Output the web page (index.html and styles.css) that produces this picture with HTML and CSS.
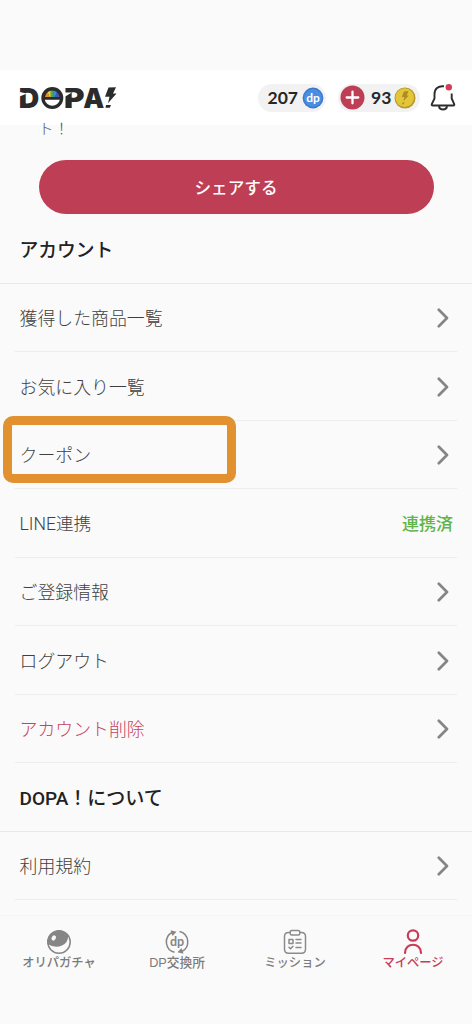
FILE: index.html
```html
<!DOCTYPE html>
<html lang="ja">
<head>
<meta charset="utf-8">
<meta name="viewport" content="width=device-width, initial-scale=1">
<title>DOPA! マイページ</title>
<link rel="stylesheet" href="styles.css">
</head>
<body>
<svg width="0" height="0" class="defs" aria-hidden="true">
  <symbol id="chevron" viewBox="0 0 12 20"><path d="M1.800 1.800 10 10l-8.200 8.200" fill="none" stroke="#858585" stroke-width="2.700" stroke-linecap="round" stroke-linejoin="round"/></symbol>
</svg>
<div class="app">
  <header class="header">
    <svg class="logo" width="104" height="44" viewBox="-4 -10 104 44" role="img" aria-label="DOPA!">
      <g class="logo-text">
        <text x="-1.300" y="21.700" textLength="20.500" lengthAdjust="spacingAndGlyphs">D</text>
        <text x="44" y="21.700" textLength="20.500" lengthAdjust="spacingAndGlyphs">P</text>
        <text x="63.300" y="21.700" textLength="21" lengthAdjust="spacingAndGlyphs">A</text>
      </g>
      <path d="M-.5 1v4.500L4 8.500H-.5zM-.5 6l7.500 1.500-7.500 3z M44.500 6.500h7.300L44.500 11z" fill="#fff"/>
      <circle cx="32.300" cy="12" r="11" fill="#2b2b2b"/>
      <path d="M25 11a7.400 7.400 0 0 1 2.600-4.700l2 4.700z" fill="#f18a25"/>
      <path d="M27.600 6.300a7.400 7.400 0 0 1 3.200-1.600V11h-1.200z" fill="#e9d33b"/>
      <path d="M30.800 4.700h3V11h-3z" fill="#50aa52"/>
      <path d="M33.800 4.700A7.400 7.400 0 0 1 37 6.300L35 11h-1.200z" fill="#378fda"/>
      <path d="M37 6.300a7.400 7.400 0 0 1 2.600 4.700H35z" fill="#4557b8"/>
      <path d="M24.800 13.800h15a7.600 7.100 0 0 1-15 0z" fill="#fff"/>
      <path d="m88.500 1.500 7.500-.2-3 6.200h3.500l-8.500 9.800 1.500-6.500h-4.500z" fill="#2b2b2b"/>
      <path d="M86 19h5l-1.200 2.700h-4.300z" fill="#2b2b2b"/>
    </svg>
    <div class="wallet">
      <div class="pill pill-dp"><span class="amount">207</span>
        <svg width="22" height="22" viewBox="0 0 22 22"><circle cx="11" cy="11" r="10.400" fill="#3b79cc"/><circle cx="11" cy="11" r="9" fill="#4b8de0"/><text x="11" y="14.800" class="dp-coin">dp</text></svg>
      </div>
      <div class="pill pill-coin">
        <svg width="25" height="25" viewBox="0 0 25 25"><circle cx="12.500" cy="12.500" r="12" fill="#be3e56"/><path d="M12.500 6.700v11.600M6.700 12.500h11.600" stroke="#fff" stroke-width="2.300" stroke-linecap="round"/></svg>
        <span class="amount">93</span>
        <svg width="22" height="22" viewBox="0 0 22 22"><circle cx="11" cy="11" r="10.500" fill="#b7972c"/><circle cx="10.700" cy="10.600" r="9.300" fill="#e3c637"/><path d="m10 4.500 4.500-.4-1.800 4.300h2l-5.300 5.800 1-4.300H7.700zM8.500 15.500h2l-.6 1.700H8z" fill="#ad8b25"/></svg>
      </div>
    </div>
    <svg class="bell" width="26" height="28" viewBox="0 0 26 28">
      <path d="M14 2.300C8 1.500 4.500 5 4.500 10v4.500L1.800 20.200q-.5 1.300 1 1.300h20.400q1.500 0 1-1.300l-2.500-5.700V9.500M9 22.500c.7 4 7.300 4 8 0" fill="none" stroke="#2d2d2d" stroke-width="1.900"/>
      <circle cx="18.800" cy="3.300" r="3.200" fill="#d43b59"/>
    </svg>
  </header>
  <main class="main">
    <p class="intro">ト！</p>
    <button class="share">シェアする</button>
    <h2 class="heading">アカウント</h2>
    <ul class="menu">
      <li class="row">獲得した商品一覧<svg class="chevron"><use href="#chevron"/></svg></li>
      <li class="row">お気に入り一覧<svg class="chevron"><use href="#chevron"/></svg></li>
      <li class="row coupon">クーポン<svg class="chevron"><use href="#chevron"/></svg></li>
      <li class="row line">LINE連携<span class="linked">連携済</span></li>
      <li class="row">ご登録情報<svg class="chevron"><use href="#chevron"/></svg></li>
      <li class="row">ログアウト<svg class="chevron"><use href="#chevron"/></svg></li>
      <li class="row danger">アカウント削除<svg class="chevron"><use href="#chevron"/></svg></li>
    </ul>
    <h2 class="heading about">DOPA！について</h2>
    <ul class="menu">
      <li class="row">利用規約<svg class="chevron"><use href="#chevron"/></svg></li>
    </ul>
  </main>
  <nav class="tabs">
    <a class="tab"><svg width="26" height="26" viewBox="0 0 26 26"><circle cx="13" cy="13" r="11.200" fill="#fafafa" stroke="#868686" stroke-width="1.500"/><path d="M1.500 15A11.500 11.500 0 0 1 22 6q1 7-6 10.500-7 3-14.500-1.500z" fill="#868686"/><ellipse cx="7.700" cy="9" rx="2" ry="2.700" transform="rotate(30 7.700 9)" fill="#fafafa"/></svg><span>オリパガチャ</span></a>
    <a class="tab"><svg width="26" height="26" viewBox="0 0 26 26"><g fill="none" stroke="#868686" stroke-width="1.500"><path d="M10.500 23.300A10.700 10.700 0 0 1 8 3.500M15.500 2.600A10.700 10.700 0 0 1 18 22.500"/></g><path d="m6.500 1.200 6 1.500-4 4.300zM19.500 24.700l-6-1.500 4-4.300z" fill="#868686"/><text x="13" y="16.600" class="dp-tab">dp</text></svg><span class="wide">DP交換所</span></a>
    <a class="tab"><svg width="26" height="26" viewBox="0 0 26 26"><g fill="none" stroke="#8b8b8b" stroke-width="1.500" stroke-linejoin="round" stroke-linecap="round"><path d="M8 3.500H6.500q-4 0-4 4v12.700q0 4 4 4h13q4 0 4-4V7.500q0-4-4-4H18"/><rect x="8.200" y="1.500" width="9.600" height="4.500" rx="1.500"/><path d="M7 10.500h4v4H7zM14 10.500h5M14 14h5M7 18.300l1.500 1.500 2.500-2.600M14 18.500h5"/></g></svg><span>ミッション</span></a>
    <a class="tab active"><svg width="26" height="26" viewBox="0 0 26 26"><g fill="none" stroke="#c73d59" stroke-width="2.200" stroke-linecap="round"><circle cx="13" cy="6.500" r="5.200"/><path d="M5 24c0-11 16-11 16 0"/></g></svg><span>マイページ</span></a>
  </nav>
</div>
</body>
</html>
```
FILE: styles.css
```css
*, *::before, *::after { box-sizing: border-box; }
body { margin: 0; background: #fafafa; font-family: Roboto, "Noto Sans CJK JP", sans-serif; color: #3f3f3f; text-spacing-trim: space-all; }
.defs { position: absolute; }
.app { height: 1024px; padding-top: 70px; display: flex; flex-direction: column; overflow: hidden; }
.header { height: 55px; flex: none; background: #fff; display: flex; align-items: center; padding: 0 16px; }
.logo { flex: none; }
.logo-text { font: 900 27.5px Inter, sans-serif; fill: #2b2b2b; }
.wallet { display: flex; gap: 12px; margin-left: auto; }
.pill { height: 28px; border-radius: 14px; background: #f2f2f2; display: flex; align-items: center; }
.pill-dp { width: 68px; padding-left: 9.500px; gap: 4.500px; }
.pill-coin { width: 82px; padding-left: 2px; gap: 6px; }
.pill-coin svg:last-child { margin-left: -3px; }
.pill svg { flex: none; }
.amount { font: 700 17.5px/28px Lato, sans-serif; color: #272727; }
.dp-coin { font: 700 12px Lato, sans-serif; fill: #fff; text-anchor: middle; }
.bell { margin-left: 10px; overflow: visible; flex: none; }
.main { height: 790px; flex: none; }
.intro { margin: -6px 0 0 38.500px; height: 41px; font-size: 15px; line-height: 21px; font-weight: 300; letter-spacing: .5px; color: #555; }
.share { display: block; width: 395px; height: 54px; margin: 0 0 0 38.500px; border: 0; border-radius: 27px; background: #bd3e55; color: #fff; font: 500 16.6px "Noto Sans CJK JP", sans-serif; padding: 0; }
.heading { margin: 0; height: 69.500px; padding-left: 19.500px; border-bottom: 1px solid #e9e9e9; font-size: 18.800px; line-height: 74px; font-weight: 500; color: #222; }
.heading.about { height: 68.500px; line-height: 71px; font-size: 19px; }
.menu { margin: 0 15px; padding: 0; list-style: none; }
.row { position: relative; height: 68.500px; padding: 0 8px 0 4.500px; border-bottom: 1px solid #ededed; display: flex; align-items: center; justify-content: space-between; font-size: 17.900px; font-weight: 300; }
.chevron { width: 12px; height: 20px; margin-top: 2px; }
.line { font-size: 17.600px; }
.danger { color: #c8425f; }
.linked { color: #61b548; font-weight: 500; font-size: 17px; margin-right: -4px; }
/* Highlight frame around the coupon entry */
.coupon::after { content: ""; position: absolute; left: -12px; top: -5px; width: 233px; height: 67px; border: 9px solid #e19130; border-radius: 10px; }
.tabs { height: 109px; flex: none; border-top: 1px solid #f3f3f3; display: grid; grid-template-columns: repeat(4, 1fr); padding-top: 13px; }
.tab { display: flex; flex-direction: column; align-items: center; font: 500 12.300px/16px "Liberation Sans", "Noto Sans CJK JP", sans-serif; color: #7b7b7b; }
.tab svg { flex: none; }
.tab .wide { font-size: 12.700px; }
.tab.active { color: #c73d59; }
.dp-tab { font: 700 12.500px Lato, sans-serif; fill: #868686; text-anchor: middle; }
```
